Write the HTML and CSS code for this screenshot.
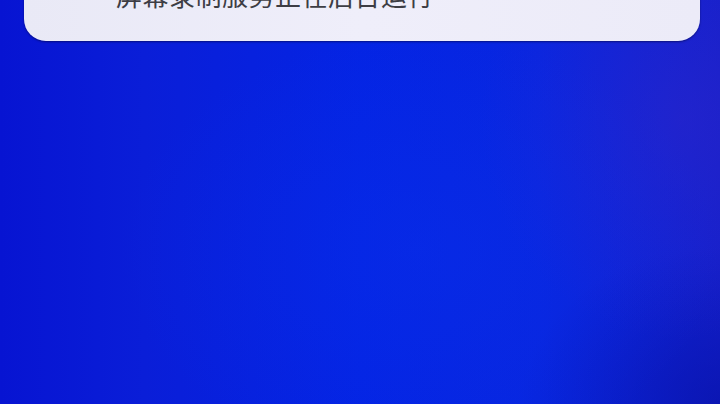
FILE: index.html
```html
<!DOCTYPE html>
<html lang="zh">
<head>
<meta charset="utf-8">
<link rel="stylesheet" href="styles.css">
</head>
<body>
<div class="screen">
  <div class="notice">
    <div class="notice-text">屏幕录制服务正在后台运行</div>
  </div>
</div>
</body>
</html>
```
FILE: styles.css
```css
html, body {
  margin: 0;
  padding: 0;
  width: 720px;
  height: 404px;
  overflow: hidden;
}
.screen {
  width: 720px;
  height: 404px;
  background:
    radial-gradient(ellipse 200px 220px at 680px 120px, rgba(60,40,200,0.35), rgba(60,40,200,0) 100%),
    radial-gradient(ellipse 300px 220px at 420px 250px, rgba(10,50,235,0.35), rgba(10,50,235,0) 100%),
    radial-gradient(ellipse 200px 160px at 720px 404px, rgba(0,10,150,0.45), rgba(0,10,150,0) 100%),
    linear-gradient(90deg, #0714d2 0%, #0a1ed8 20%, #0424e4 50%, #0826e0 75%, #1420cc 100%);
  display: flex;
  flex-direction: column;
  font-family: "Noto Sans CJK SC", "Noto Sans", sans-serif;
}
.notice {
  margin: -40px 20px 0 24px;
  height: 81px;
  border-radius: 22px;
  background: linear-gradient(90deg, #e9e9f6 0%, #efeefa 50%, #ecebf8 100%);
  box-shadow: 0 1px 2px rgba(0,0,40,0.5);
  display: flex;
  padding-left: 92px;
  padding-top: 22px;
  box-sizing: border-box;
}
.notice-text {
  font-size: 26px;
  line-height: 26px;
  color: #3d3d44;
  letter-spacing: 0.5px;
  white-space: nowrap;
}
```
